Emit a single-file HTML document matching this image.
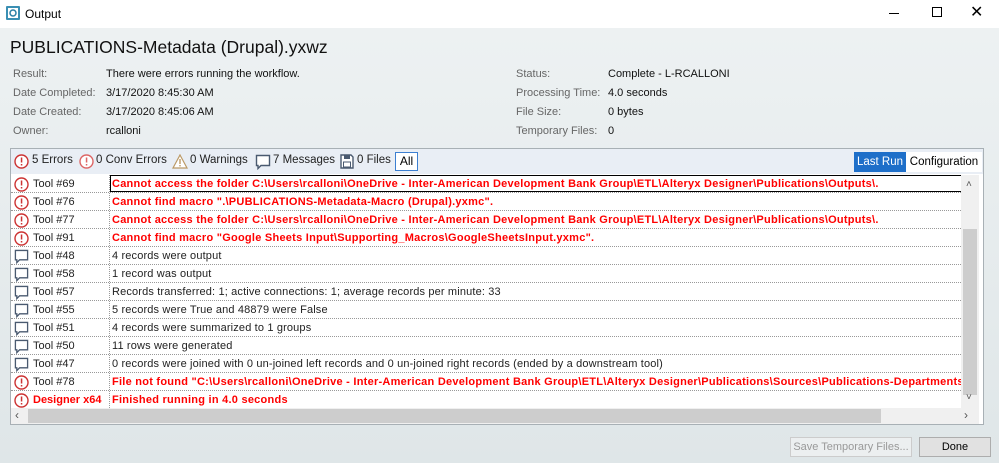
<!DOCTYPE html>
<html><head><style>
*{margin:0;padding:0;box-sizing:border-box}
body{width:999px;height:463px;overflow:hidden;font-family:"Liberation Sans",sans-serif;font-size:11px;color:#000;background:linear-gradient(#eef2f3,#dfe6e8);position:relative}
.tb{position:absolute;left:0;top:0;width:999px;height:28px;background:#fff}
.ab{position:absolute}
.h{position:absolute;left:10px;top:37px;font-size:17.5px;color:#111}
.lab{position:absolute;color:#666;font-size:11px}
.val{position:absolute;color:#111;font-size:11px}
.panel{position:absolute;left:10px;top:148px;width:974px;height:277px;border:1px solid #a8b0b5;background:#fff}
.toolbar{position:absolute;left:0;top:0;width:972px;height:25px;background:#e9eef5}
.ti{position:absolute;top:5px;font-size:11.5px;color:#222}
.row{position:absolute;left:0;width:950px;height:18px;border-bottom:1px dotted #999;overflow:hidden}
.row .n{position:absolute;left:22px;top:3px;color:#222}
.row .m{position:absolute;left:101px;top:3px;white-space:nowrap;color:#222;letter-spacing:.15px}
.row .c{position:absolute;left:98px;top:0;bottom:0;border-left:1px dotted #999}
.e .m{color:#f00;font-weight:bold;letter-spacing:.25px}
.ic{position:absolute;left:3px;top:2px;width:15px;height:15px}
.btn{position:absolute;top:437px;height:20px;border:1px solid #adadad;background:#e1e1e1;text-align:center;line-height:18px;font-size:11px}
</style></head><body>
<div class="tb">
<svg class="ab" style="left:5px;top:5px" width="16" height="16"><rect x="1" y="1" width="14" height="14" fill="#3a8fb3" rx="1"/><rect x="3" y="3" width="10" height="10" fill="#fff"/><circle cx="8" cy="8" r="3" fill="none" stroke="#2a7fa5" stroke-width="1.5"/></svg>
<div class="ab" style="left:25px;top:7px;font-size:12px">Output</div>
<div class="ab" style="left:889px;top:13px;width:10px;border-top:1px solid #000"></div>
<div class="ab" style="left:932px;top:7px;width:10px;height:10px;border:1px solid #000"></div>
<div class="ab" style="left:970px;top:2px;font-size:16px">✕</div>
</div>
<div class="h">PUBLICATIONS-Metadata (Drupal).yxwz</div>
<div class="lab" style="left:13px;top:68px">Result:</div><div class="val" style="left:106px;top:68px">There were errors running the workflow.</div>
<div class="lab" style="left:13px;top:87px">Date Completed:</div><div class="val" style="left:106px;top:87px">3/17/2020 8:45:30 AM</div>
<div class="lab" style="left:13px;top:106px">Date Created:</div><div class="val" style="left:106px;top:106px">3/17/2020 8:45:06 AM</div>
<div class="lab" style="left:13px;top:125px">Owner:</div><div class="val" style="left:106px;top:125px">rcalloni</div>
<div class="lab" style="left:516px;top:68px">Status:</div><div class="val" style="left:608px;top:68px">Complete - L-RCALLONI</div>
<div class="lab" style="left:516px;top:87px">Processing Time:</div><div class="val" style="left:608px;top:87px">4.0 seconds</div>
<div class="lab" style="left:516px;top:106px">File Size:</div><div class="val" style="left:608px;top:106px">0 bytes</div>
<div class="lab" style="left:516px;top:125px">Temporary Files:</div><div class="val" style="left:608px;top:125px">0</div>
<div class="panel">
<div class="toolbar">
<svg class="ab" style="left:3px;top:5px" width="15" height="15"><circle cx="7.5" cy="7.5" r="6.5" fill="#fff" stroke="#c33" stroke-width="1.4"/><rect x="6.8" y="3.5" width="1.5" height="5" fill="#c33"/><rect x="6.8" y="10" width="1.5" height="1.5" fill="#c33"/></svg>
<div class="ti" style="left:21px">5 Errors</div>
<svg class="ab" style="left:68px;top:5px" width="15" height="15"><circle cx="7.5" cy="7.5" r="6.5" fill="#fff" stroke="#d66" stroke-width="1.4"/><rect x="6.8" y="3.5" width="1.5" height="5" fill="#d66"/><rect x="6.8" y="10" width="1.5" height="1.5" fill="#d66"/></svg>
<div class="ti" style="left:85px">0 Conv Errors</div>
<svg class="ab" style="left:161px;top:5px" width="16" height="15"><path d="M8 1L15 14H1Z" fill="#fff" stroke="#b96" stroke-width="1.2"/><rect x="7.3" y="5" width="1.4" height="5" fill="#b96"/><rect x="7.3" y="11" width="1.4" height="1.4" fill="#b96"/></svg>
<div class="ti" style="left:179px">0 Warnings</div>
<svg class="ab" style="left:244px;top:5px" width="16" height="16"><path d="M1.5 1.5H14.5V11.5H6L3 14.5V11.5H1.5Z" fill="#fff" stroke="#4a5a70" stroke-width="1.4"/></svg>
<div class="ti" style="left:262px">7 Messages</div>
<svg class="ab" style="left:329px;top:5px" width="14" height="15"><path d="M1 1H11L13 3V14H1Z" fill="#fff" stroke="#4a5a70" stroke-width="1.4"/><rect x="4" y="1" width="6" height="4" fill="#4a5a70"/><rect x="3.5" y="8" width="7" height="5" fill="none" stroke="#4a5a70"/></svg>
<div class="ti" style="left:346px">0 Files</div>
<div class="ab" style="left:384px;top:3px;width:23px;height:19px;border:1px solid #3c7fd1;background:#fff;text-align:center;line-height:17px;font-size:12px">All</div>
<div class="ab" style="left:843px;top:3px;width:52px;height:20px;background:#1e6fc9;color:#fff;text-align:center;line-height:20px;font-size:11.5px">Last Run</div>
<div class="ab" style="left:895px;top:3px;width:76px;height:20px;background:#fff;text-align:center;line-height:20px;font-size:11.5px">Configuration</div>
</div>
<div id="rows"></div>
<div class="ab" style="left:950px;top:26px;width:18px;height:233px;background:#f0f0f0"></div>
<div class="ab" style="left:952px;top:80px;width:14px;height:166px;background:#cdcdcd"></div>
<div class="ab" style="left:955px;top:30px;font-size:10px;color:#555">˄</div>
<div class="ab" style="left:955px;top:243px;font-size:10px;color:#555">˅</div>
<div class="ab" style="left:0;top:259px;width:968px;height:16px;background:#f0f0f0"></div>
<div class="ab" style="left:17px;top:260px;width:853px;height:14px;background:#cdcdcd"></div>
<div class="ab" style="left:4px;top:259px;font-size:12px;color:#555">‹</div>
<div class="ab" style="left:953px;top:259px;font-size:12px;color:#555">›</div>
</div>
<div class="btn" style="left:790px;width:122px;color:#999;background:#eceff0;border-color:#ccc">Save Temporary Files...</div>
<div class="btn" style="left:919px;width:72px">Done</div>
<script>
var E='<svg class="ic" viewBox="0 0 15 15"><circle cx="7.5" cy="7.5" r="6.5" fill="#fff" stroke="#c33" stroke-width="1.4"/><rect x="6.8" y="3.5" width="1.5" height="5" fill="#c33"/><rect x="6.8" y="10" width="1.5" height="1.5" fill="#c33"/></svg>';
var M='<svg class="ic" viewBox="0 0 16 16"><path d="M1.5 1.5H14.5V11.5H6L3 14.5V11.5H1.5Z" fill="#fff" stroke="#4a5a70" stroke-width="1.4"/></svg>';
var d=[[1,'Tool #69','Cannot access the folder C:\\Users\\rcalloni\\OneDrive - Inter-American Development Bank Group\\ETL\\Alteryx Designer\\Publications\\Outputs\\.'],
[1,'Tool #76','Cannot find macro ".\\PUBLICATIONS-Metadata-Macro (Drupal).yxmc".'],
[1,'Tool #77','Cannot access the folder C:\\Users\\rcalloni\\OneDrive - Inter-American Development Bank Group\\ETL\\Alteryx Designer\\Publications\\Outputs\\.'],
[1,'Tool #91','Cannot find macro "Google Sheets Input\\Supporting_Macros\\GoogleSheetsInput.yxmc".'],
[0,'Tool #48','4 records were output'],[0,'Tool #58','1 record was output'],
[0,'Tool #57','Records transferred: 1; active connections: 1; average records per minute: 33'],
[0,'Tool #55','5 records were True and 48879 were False'],[0,'Tool #51','4 records were summarized to 1 groups'],
[0,'Tool #50','11 rows were generated'],[0,'Tool #47','0 records were joined with 0 un-joined left records and 0 un-joined right records (ended by a downstream tool)'],
[1,'Tool #78','File not found "C:\\Users\\rcalloni\\OneDrive - Inter-American Development Bank Group\\ETL\\Alteryx Designer\\Publications\\Sources\\Publications-Departments (D'],
[1,'Designer x64','Finished running in 4.0 seconds']];
var h='';d.forEach(function(r,i){var t=26+i*18;
h+='<div class="row'+(r[0]?' e':'')+'" style="top:'+t+'px">'+(r[0]?E:M)+'<div class="n"'+(i==12?' style="color:#f00;font-weight:bold"':'')+'>'+r[1]+'</div><div class="c"></div><div class="m">'+r[2].replace(/</g,'&lt;')+'</div>'+(i==0?'<div style="position:absolute;left:99px;top:0;width:862px;height:18px;border:1px solid #000;border-bottom-width:2px"></div>':'')+'</div>';});
document.getElementById('rows').innerHTML=h;
</script>
</body></html>
